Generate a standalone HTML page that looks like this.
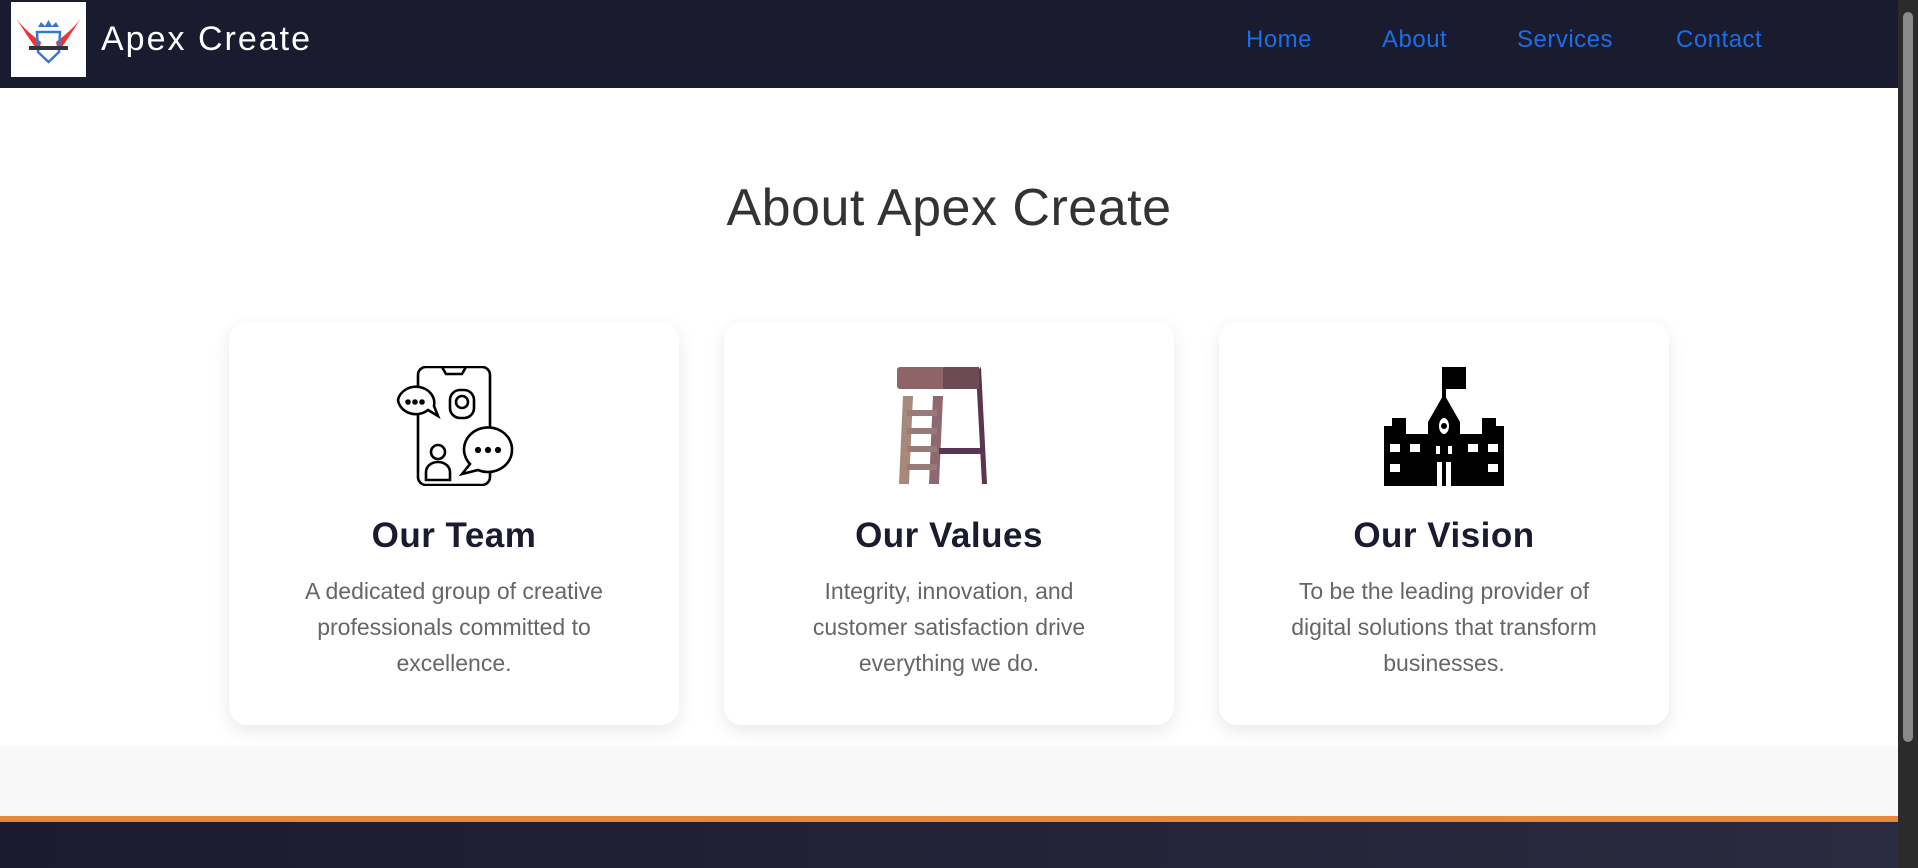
<!DOCTYPE html>
<html><head><meta charset="utf-8"><style>
*{margin:0;padding:0;box-sizing:border-box}
body{width:1918px;height:868px;overflow:hidden;background:#fff;font-family:"Liberation Sans",sans-serif;position:relative}
nav{position:absolute;left:0;top:0;width:1898px;height:88px;background:#1b1b2f}
.logo{position:absolute;left:11px;top:2px;width:75px;height:75px;background:#fff}
.brand{position:absolute;left:101px;top:20px;color:#fff;font-size:34px;font-weight:300;letter-spacing:2px}
.links a{position:absolute;top:26px;color:#1a6ee8;font-size:24px;text-decoration:none;font-weight:300;letter-spacing:0.5px}
h1{position:absolute;left:0;width:1898px;top:178px;text-align:center;font-size:52px;font-weight:300;color:#333;letter-spacing:0.5px}
.card{position:absolute;top:322px;width:450px;height:403px;background:#fff;border-radius:18px;box-shadow:0 6px 18px rgba(0,0,0,0.09);text-align:center}
.card svg{position:absolute;left:165px;top:44px}
.card h3{position:absolute;top:194px;width:100%;font-size:35px;font-weight:bold;color:#1b1b2f;letter-spacing:0.5px}
.card p{position:absolute;top:251px;left:65px;width:320px;font-size:23px;line-height:36px;color:#666;font-weight:300}
.band{position:absolute;left:0;top:746px;width:1898px;height:70px;background:#f8f8f8}
.orange{position:absolute;left:0;top:816px;width:1898px;height:6px;background:#e8883a}
.foot{position:absolute;left:0;top:822px;width:1898px;height:46px;background:linear-gradient(90deg,#1b1b2f,#2a2a40)}
.sb{position:absolute;left:1898px;top:0;width:20px;height:868px;background:#2b2b2b}
.sb div{position:absolute;left:5px;top:12px;width:10px;height:730px;background:#8a8a8a;border-radius:5px}
</style></head><body>
<nav>
<div class="logo"><svg width="75" height="75" viewBox="0 0 75 75">
<path d="M5 16 C14 30 20 40 28 50 L30 40 C22 34 12 26 5 16Z" fill="#e33"/>
<path d="M70 16 C61 30 55 40 47 50 L45 40 C53 34 63 26 70 16Z" fill="#e33"/>
<path d="M26 30 L49 30 L48 50 L37.5 60 L27 50Z" fill="none" stroke="#3a78d0" stroke-width="2.5"/>
<path d="M27 25 L30 20 L34 24 L37.5 18 L41 24 L45 20 L48 25Z" fill="#3a78d0"/>
<rect x="18" y="44" width="39" height="4" fill="#333"/>
</svg></div>
<div class="brand">Apex Create</div>
<div class="links"><a style="left:1246px">Home</a><a style="left:1382px">About</a><a style="left:1517px">Services</a><a style="left:1676px">Contact</a></div>
</nav>
<h1>About Apex Create</h1>
<div class="card" style="left:229px">
<svg width="120" height="120" viewBox="0 0 120 120" fill="none" stroke="#000" stroke-width="2.6">
<rect x="24" y="1" width="72" height="118" rx="8" fill="#fff"/>
<path d="M48 1 L52 8 H68 L72 1"/>
<path d="M4 34 A18 16 0 1 1 40 40 L44 50 L34 44 A18 16 0 0 1 4 34Z" fill="#fff"/>
<circle cx="14" cy="36" r="1.5" fill="#000"/><circle cx="21" cy="36" r="1.5" fill="#000"/><circle cx="28" cy="36" r="1.5" fill="#000"/>
<rect x="56" y="24" width="24" height="28" rx="10" fill="#fff"/><circle cx="68" cy="36" r="6"/>
<path d="M118 84 A24 22 0 1 0 76 98 L68 108 L84 104 A24 22 0 0 0 118 84Z" fill="#fff"/>
<circle cx="84" cy="84" r="1.8" fill="#000"/><circle cx="94" cy="84" r="1.8" fill="#000"/><circle cx="104" cy="84" r="1.8" fill="#000"/>
<circle cx="44" cy="86" r="7"/><path d="M32 114 V106 A12 10 0 0 1 56 106 V114Z"/>
</svg>
<h3>Our Team</h3><p>A dedicated group of creative professionals committed to excellence.</p></div>
<div class="card" style="left:724px">
<svg width="120" height="120" viewBox="0 0 120 120">
<path d="M14 30 L10 118 H20 L24 30Z" fill="#a8887a"/>
<path d="M44 30 L40 118 H50 L54 30Z" fill="#8e6870"/>
<rect x="18" y="44" width="30" height="6" fill="#9a7a78"/><rect x="18" y="62" width="30" height="6" fill="#9a7a78"/><rect x="18" y="80" width="30" height="6" fill="#9a7a78"/><rect x="18" y="98" width="30" height="6" fill="#9a7a78"/>
<path d="M92 1 L98 118 H93 L87 6Z" fill="#5a3550"/>
<rect x="50" y="82" width="42" height="6" fill="#5a3550"/>
<rect x="8" y="1" width="48" height="22" rx="3" fill="#8e6468"/><rect x="54" y="1" width="36" height="22" fill="#6e4a55"/>
</svg>
<h3>Our Values</h3><p>Integrity, innovation, and customer satisfaction drive everything we do.</p></div>
<div class="card" style="left:1219px">
<svg width="120" height="120" viewBox="0 0 120 120">
<rect x="58" y="1" width="24" height="22" fill="#000"/><rect x="58" y="1" width="4" height="32" fill="#000"/>
<path d="M60 28 L76 56 V120 H44 V56Z" fill="#000"/>
<path d="M0 120 V60 H8 V52 H22 V68 H44 V120Z M120 120 V60 H112 V52 H98 V68 H76 V120Z" fill="#000"/>
<ellipse cx="60" cy="60" rx="5" ry="8" fill="#fff"/><circle cx="60" cy="60" r="3" fill="#000"/>
<rect x="52" y="80" width="4" height="8" fill="#fff"/><rect x="64" y="80" width="4" height="8" fill="#fff"/>
<rect x="53" y="96" width="14" height="24" fill="#fff"/><rect x="58" y="96" width="4" height="24" fill="#000"/>
<rect x="6" y="78" width="10" height="8" fill="#fff"/><rect x="6" y="98" width="10" height="8" fill="#fff"/><rect x="104" y="78" width="10" height="8" fill="#fff"/><rect x="104" y="98" width="10" height="8" fill="#fff"/>
<rect x="26" y="78" width="10" height="8" fill="#fff"/><rect x="84" y="78" width="10" height="8" fill="#fff"/>
</svg>
<h3>Our Vision</h3><p>To be the leading provider of digital solutions that transform businesses.</p></div>
<div class="band"></div><div class="orange"></div><div class="foot"></div>
<div class="sb"><div></div></div>
</body></html>
